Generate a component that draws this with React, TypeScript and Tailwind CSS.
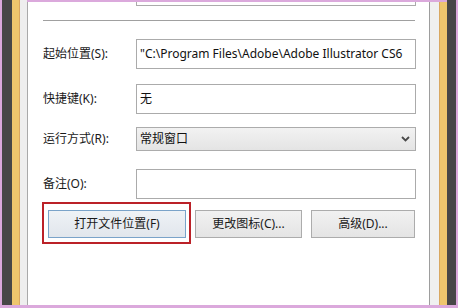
import React from "react";

const font = { fontFamily: '"Noto Sans", "Noto Sans CJK SC", sans-serif' };

function Label({ children }: { children: React.ReactNode }) {
  return (
    <div className="w-[93px] shrink-0 text-[12px] leading-none text-[#1a1a1a] whitespace-nowrap">{children}</div>
  );
}

function Field({ value }: { value?: string }) {
  return (
    <div className="flex-1 min-w-0 h-[30px] border border-[#ababab] bg-white flex items-center pl-[3px] overflow-hidden whitespace-nowrap text-[12px] leading-none text-[#111]">
      {value}
    </div>
  );
}

function Btn({ children, w, focused }: { children: React.ReactNode; w: string; focused?: boolean }) {
  return (
    <div
      className={`relative ${w} h-[28px] shrink-0 flex items-center justify-center whitespace-nowrap text-[12px] leading-none text-[#1a1a1a] border ${
        focused
          ? "border-[#7aa3c9] bg-gradient-to-b from-[#eef2f6] to-[#e1e6ec]"
          : "border-[#acacac] bg-gradient-to-b from-[#f1f1f1] to-[#e4e4e4]"
      }`}
    >
      {children}
      {focused && (
        <span className="absolute left-[-7px] right-[-6px] top-[-9px] bottom-[-7px] border-2 border-[#bb2128] pointer-events-none" />
      )}
    </div>
  );
}

export default function App() {
  return (
    <div className="w-[458px] h-[308px] flex flex-col bg-[#dba9dc] overflow-hidden" style={font}>
      <div className="flex h-[305px] shrink-0">
        <div className="w-[2px] shrink-0 bg-[#dba9dc]" />
        <div className="w-[10px] shrink-0 bg-[#474747]" />
        <div className="w-[7px] shrink-0 bg-[#eec66d]" />
        <div className="w-[1px] shrink-0 bg-[#d9a862]" />
        <div className="w-[7px] shrink-0 bg-[#eeeeee]" />
        <div className="w-[1px] shrink-0 bg-[#a9a9a9] border-t-2 border-[#dba9dc]" />
        <div className="flex-1 min-w-0 flex flex-col">
          <div className="h-[2px] shrink-0 bg-[#dba9dc]" />
          <div className="flex-1 bg-white flex flex-col">
            {/* top field stub */}
            <div className="ml-[108px] mr-[13px] h-[4px] shrink-0 border-x border-b border-[#ababab]" />
            {/* separator */}
            <div className="mt-[14px] ml-[15px] mr-[14px] h-[1px] shrink-0 bg-[#a0a0a0]" />
            {/* row 1 */}
            <div className="mt-[18px] pl-[15px] pr-[13px] flex items-center">
              <Label>起始位置(S):</Label>
              <Field value={'"C:\\Program Files\\Adobe\\Adobe Illustrator CS6'} />
            </div>
            {/* row 2 */}
            <div className="mt-[15px] pl-[15px] pr-[13px] flex items-center">
              <Label>快捷键(K):</Label>
              <Field value="无" />
            </div>
            {/* row 3 */}
            <div className="mt-[13px] pl-[15px] pr-[13px] flex items-center">
              <Label>运行方式(R):</Label>
              <div className="flex-1 min-w-0 h-[24px] border border-[#acacac] bg-gradient-to-b from-[#f2f2f2] to-[#e4e4e4] flex items-center pl-[3px] pr-[4px] text-[12px] leading-none text-[#111]">
                <span className="flex-1">常规窗口</span>
                <svg width="9" height="6" viewBox="0 0 9 6" className="mr-[1px]">
                  <path d="M1 1 L4.5 4.5 L8 1" stroke="#4a4a4a" strokeWidth="1.8" fill="none" />
                </svg>
              </div>
            </div>
            {/* row 4 */}
            <div className="mt-[18px] pl-[15px] pr-[13px] flex items-center">
              <Label>备注(O):</Label>
              <Field />
            </div>
            {/* buttons */}
            <div className="mt-[11px] pl-[20px] flex gap-[9px]">
              <Btn w="w-[138px]" focused>
                打开文件位置(F)
              </Btn>
              <Btn w="w-[107px]">更改图标(C)...</Btn>
              <Btn w="w-[104px]">高级(D)...</Btn>
            </div>
          </div>
        </div>
        <div className="w-[1px] shrink-0 bg-[#9d9d9d] border-t-2 border-[#dba9dc]" />
        <div className="w-[9px] shrink-0 bg-[#f0f0f0] border-t-2 border-[#dba9dc]" />
        <div className="w-[1px] shrink-0 bg-[#d9a862] border-t-2 border-[#dba9dc]" />
        <div className="w-[7px] shrink-0 bg-[#eec66d] border-t-2 border-[#dba9dc]" />
        <div className="w-[9px] shrink-0 bg-[#474747]" />
        <div className="w-[2px] shrink-0 bg-[#dba9dc]" />
      </div>
      <div className="h-[3px] shrink-0 bg-[#dba9dc]" />
    </div>
  );
}
